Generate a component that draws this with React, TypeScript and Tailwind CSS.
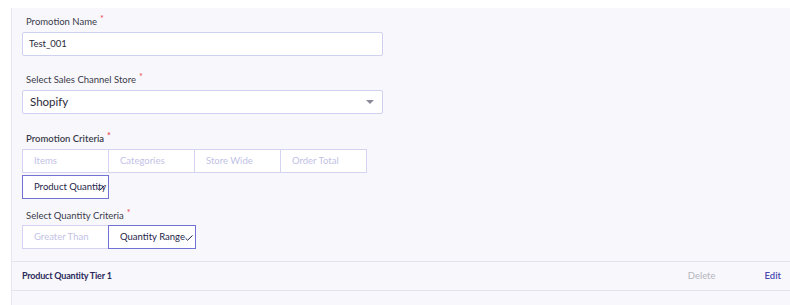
import React from "react";

function Check({ className }: { className?: string }) {
  return (
    <svg className={className} width="8" height="6" viewBox="0 0 8 6" fill="none">
      <path d="M0.8 3.5 L2.6 5.2 L7.2 0.8" stroke="#1e1e4a" strokeWidth="1" strokeLinecap="round" strokeLinejoin="round" />
    </svg>
  );
}

function Label({ text, bold }: { text: string; bold?: boolean }) {
  return (
    <div className={`pl-[4px] h-[14px] leading-[14px] text-[9.5px] text-[#3a3a4a] whitespace-nowrap ${bold ? "font-semibold" : ""}`}>
      {text}
      <span className="text-[#e5484d] ml-[3px] relative -top-[3px] text-[9px]">*</span>
    </div>
  );
}

function Opt({ text, selected, first }: { text: string; selected?: boolean; first?: boolean }) {
  return (
    <div
      className={`relative w-[87px] h-[24px] flex items-center pl-[11px] text-[9.5px] whitespace-nowrap bg-white border ${
        first ? "" : "-ml-px"
      } ${selected ? "border-[#7272d4] text-[#1e1e4a] z-10" : "border-[#d4d4f2] text-[#c2c2e6]"}`}
    >
      {text}
    </div>
  );
}

export default function App() {
  return (
    <div className="w-[790px] h-[305px] bg-white pt-[8px] pl-[11px] overflow-hidden" style={{ fontFamily: "Lato, 'Open Sans', sans-serif" }}>
      <div className="h-[297px] bg-[#f8f8fc] border-l border-[#e6e6f0]">
        <div className="pl-[10px] pt-[7px]">
          <Label text="Promotion Name" />
          <div className="mt-[3px] w-[361px] h-[24px] bg-white border border-[#d0d0f0] rounded-[2px] flex items-center pl-[6px] text-[9.5px] text-[#2a2a3a]">
            Test_001
          </div>

          <div className="mt-[17px]">
            <Label text="Select Sales Channel Store" />
          </div>
          <div className="mt-[3px] w-[361px] h-[24px] bg-white border border-[#d0d0f0] rounded-[2px] flex items-center justify-between pl-[7px] pr-[8px] text-[11.5px] text-[#2a2a3a]">
            <span>Shopify</span>
            <svg width="8" height="5" viewBox="0 0 8 5">
              <path d="M0 0 L8 0 L4 4 Z" fill="#8a8a9a" />
            </svg>
          </div>

          <div className="mt-[18px]">
            <Label text="Promotion Criteria" bold />
          </div>
          <div className="mt-[3px] flex">
            <Opt text="Items" first />
            <Opt text="Categories" />
            <Opt text="Store Wide" />
            <Opt text="Order Total" />
          </div>
          <div className="mt-[2px] flex">
            <div className="relative w-[87px] h-[24px] flex items-center pl-[11px] text-[9.5px] whitespace-nowrap bg-white border border-[#7272d4] text-[#1e1e4a]">
              Product Quantity
              <Check className="absolute left-[74px] top-[9px]" />
            </div>
          </div>

          <div className="mt-[10px]">
            <Label text="Select Quantity Criteria" />
          </div>
          <div className="mt-[2px] flex">
            <Opt text="Greater Than" first />
            <div className="relative -ml-px w-[88px] h-[24px] flex items-center pl-[11px] text-[9.5px] whitespace-nowrap bg-white border border-[#7272d4] text-[#1e1e4a] z-10">
              Quantity Range
              <Check className="absolute left-[76px] top-[9px]" />
            </div>
          </div>
        </div>

        <div className="mt-[12px] h-[30px] border-y border-[#e4e4ee] flex items-center pl-[10px] pr-[9px] text-[9.5px]">
          <span className="font-bold text-[9px] tracking-[-0.2px] text-[#2a2a5a] flex-1">Product Quantity Tier 1</span>
          <span className="text-[#b4b4bc] mr-[49px]">Delete</span>
          <span className="font-semibold text-[#4848b0]">Edit</span>
        </div>
      </div>
    </div>
  );
}
